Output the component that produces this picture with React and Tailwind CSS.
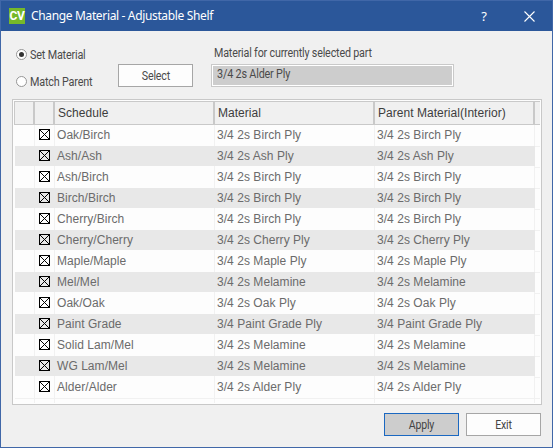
import React from "react";

const rows = [
  ["Oak/Birch", "3/4 2s Birch Ply"],
  ["Ash/Ash", "3/4 2s Ash Ply"],
  ["Ash/Birch", "3/4 2s Birch Ply"],
  ["Birch/Birch", "3/4 2s Birch Ply"],
  ["Cherry/Birch", "3/4 2s Birch Ply"],
  ["Cherry/Cherry", "3/4 2s Cherry Ply"],
  ["Maple/Maple", "3/4 2s Maple Ply"],
  ["Mel/Mel", "3/4 2s Melamine"],
  ["Oak/Oak", "3/4 2s Oak Ply"],
  ["Paint Grade", "3/4 Paint Grade Ply"],
  ["Solid Lam/Mel", "3/4 2s Melamine"],
  ["WG Lam/Mel", "3/4 2s Melamine"],
  ["Alder/Alder", "3/4 2s Alder Ply"],
];

const columns = "grid grid-cols-[20px_20px_160px_160px_160px_5px]";

function TitleBar() {
  return (
    <header className="flex h-[30px] shrink-0 items-center bg-[#2b579a] pl-2 text-white">
      <span className="flex size-4 items-center justify-center bg-[#76b82a] font-['Roboto',sans-serif] text-[12px] leading-4 font-bold tracking-[-0.4px]">
        CV
      </span>
      <h1 className="ml-[6px] grow font-['Noto_Sans',sans-serif] text-[12px] leading-4 tracking-[-0.35px] whitespace-nowrap">
        Change Material - Adjustable Shelf
      </h1>
      <span className="w-[10px] text-center font-['Noto_Sans',sans-serif] text-[13px] leading-4">?</span>
      <svg className="mr-[17px] ml-[35px] size-[11px]" viewBox="0 0 11 11" fill="none" stroke="currentColor" strokeWidth="1.1">
        <path d="M.5 .5l10 10M10.5 .5l-10 10" />
      </svg>
    </header>
  );
}

function Radio({ label, checked }) {
  return (
    <label className="flex h-[27px] items-center gap-[3px] whitespace-nowrap">
      <span className="flex size-[11px] items-center justify-center rounded-full border border-[#969696] bg-white">
        {checked && <span className="size-[5px] rounded-full bg-[#333]" />}
      </span>
      <span className="origin-left scale-x-[0.9]">{label}</span>
    </label>
  );
}

function Checkbox() {
  return (
    <svg className="mb-px ml-[2px] size-[11px]" viewBox="0 0 11 11" fill="none" stroke="#000" shapeRendering="crispEdges">
      <rect x=".5" y=".5" width="10" height="10" />
      <path d="M1 1l9 9M10 1l-9 9" />
    </svg>
  );
}

function Row({ schedule, material, shaded, first }) {
  const cell = shaded
    ? "flex items-center border-r border-[#e8e8e8] bg-[#e8e8e8] pl-[2px]"
    : first
      ? "flex items-center border-r border-[#f1f1f1] bg-[#fdfdfd] pb-px pl-[2px]"
      : "flex items-center border-r border-[#f1f1f1] bg-[#fdfdfd] pl-[2px]";
  const size = shaded ? "h-5" : first ? "h-[21px]" : "h-[22px]";
  const tail = shaded ? "border-t border-[#f1f1f1]" : first ? "" : "mt-px border-t border-[#f1f1f1]";
  return (
    <div className={`${columns} ${size} leading-5 tracking-[0.05px] whitespace-nowrap text-[#6b6b6b]`}>
      <span className={cell} />
      <span className={cell}><Checkbox /></span>
      <span className={cell}>{schedule}</span>
      <span className={cell}>{material}</span>
      <span className={cell}>{material}</span>
      <span className={tail} />
    </div>
  );
}

function HeaderCell({ children }) {
  return <span className="flex items-center border-r-2 border-[#c9c9c9] pl-[3px]">{children}</span>;
}

export default function App() {
  return (
    <div className="flex h-[448px] w-[553px] flex-col overflow-hidden border border-[#4067a8] bg-[#f0f0f0] font-['Liberation_Sans',Arial,sans-serif] text-[12px] text-[#444]">
      <TitleBar />

      <section className="flex h-[68px] shrink-0 pl-[15px] font-['Roboto',sans-serif] text-[12px] tracking-[-0.2px] text-[#4a4a4a]">
        <div className="w-[102px] pt-[10px]">
          <Radio label="Set Material" checked />
          <Radio label="Match Parent" />
        </div>
        <button className="mt-[33px] h-[23px] w-[75px] border border-[#a6a6a6] bg-[#fdfdfd]">
          <span className="inline-block scale-x-[0.89]">Select</span>
        </button>
        <div className="ml-[18px] pt-[14px]">
          <p className="ml-[3px] h-[19px] origin-left scale-x-[0.893] leading-4 whitespace-nowrap">Material for currently selected part</p>
          <div className="h-[23px] w-[243px] border border-[#c9c9c9] bg-white p-px">
            <p className="h-[19px] bg-[#cdcdcd] pl-1 leading-[17px]">
              <span className="inline-block origin-left scale-x-[0.9]">3/4 2s Alder Ply</span>
            </p>
          </div>
        </div>
      </section>

      <section className="ml-[11px] h-[306px] w-[530px] shrink-0 overflow-hidden border border-[#c8c8c8] bg-[#fdfdfd] pt-px">
        <div className="ml-px grid h-6 w-[526px] grid-cols-[20px_20px_160px_160px_160px_5px] border-y border-l border-[#c9c9c9] bg-[#f0f0f0] tracking-[0.04px] text-[#3d3d3d]">
          <HeaderCell />
          <HeaderCell />
          <HeaderCell>Schedule</HeaderCell>
          <HeaderCell>Material</HeaderCell>
          <HeaderCell>Parent Material(Interior)</HeaderCell>
          <span />
        </div>
        <div className="ml-[2px]">
          {rows.map(([schedule, material], i) => (
            <Row key={schedule} schedule={schedule} material={material} shaded={i % 2 === 1} first={i === 0} />
          ))}
          <div className={`${columns} h-[5px] w-[525px] border-t border-[#f1f1f1]`}>
            {[0, 1, 2, 3, 4].map((n) => (
              <span key={n} className="border-r border-[#f1f1f1]" />
            ))}
          </div>
        </div>
      </section>

      <footer className="mt-2 mr-[11px] flex justify-end gap-[7px] font-['Roboto',sans-serif] text-[12px] tracking-[-0.2px]">
        <button className="h-[23px] w-[75px] border border-[#1b68c1] bg-[#cdcdcd]">
          <span className="inline-block scale-x-[0.88]">Apply</span>
        </button>
        <button className="h-[23px] w-[75px] border border-[#a6a6a6] bg-[#fdfdfd]">
          <span className="inline-block scale-x-[0.88]">Exit</span>
        </button>
      </footer>
    </div>
  );
}
